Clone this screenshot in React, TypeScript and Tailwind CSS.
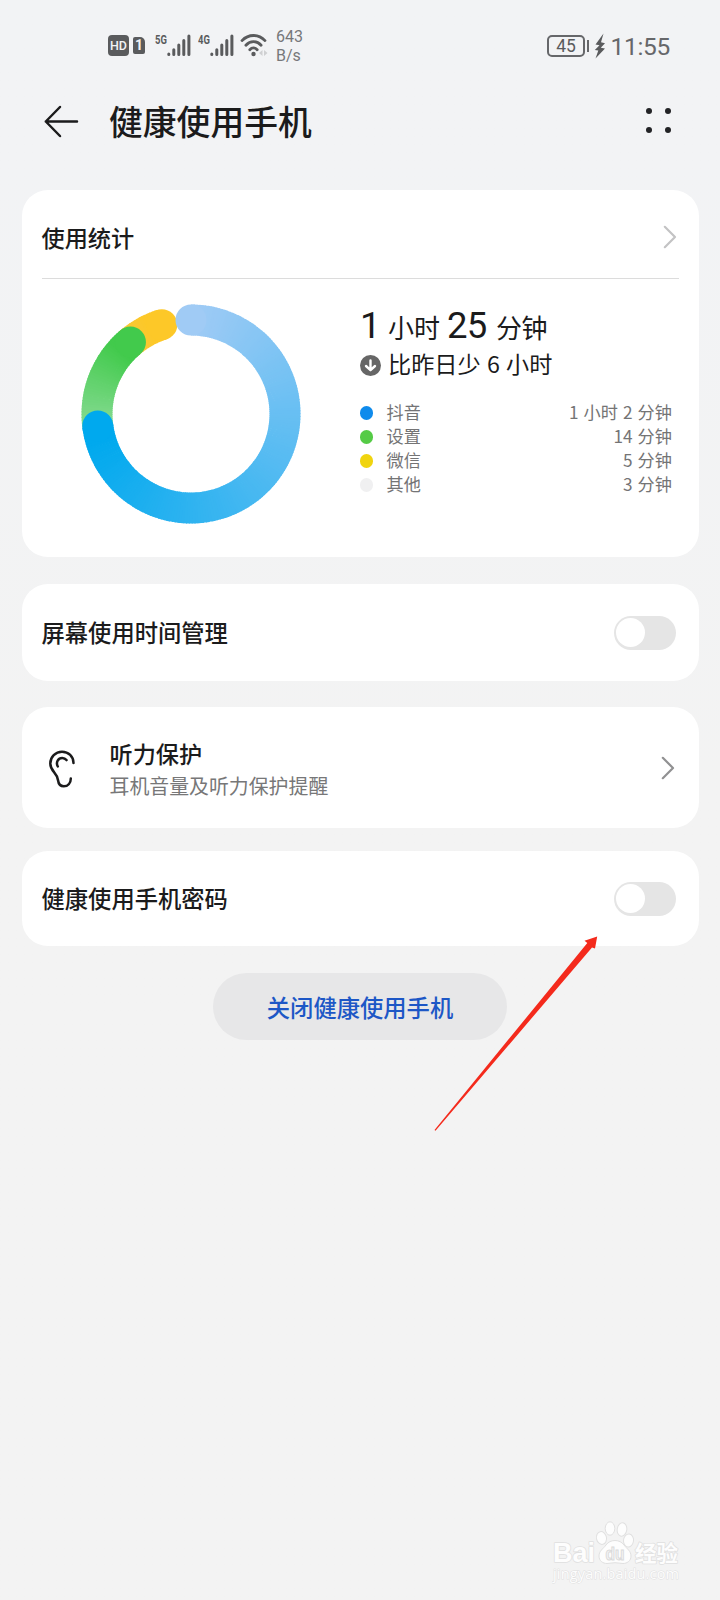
import { ReactNode } from "react";

type Usage = { name: string; time: string; dot: string };

const usages: Usage[] = [
  { name: "抖音", time: "1 小时 2 分钟", dot: "bg-[#0f8bec]" },
  { name: "设置", time: "14 分钟", dot: "bg-[#55cb46]" },
  { name: "微信", time: "5 分钟", dot: "bg-[#f0d40f]" },
  { name: "其他", time: "3 分钟", dot: "bg-[#f0f0f1]" },
];

// Angles are clockwise degrees from the top of the ring
const ring = [
  { from: 318, to: 341.9, start: [247, 200, 60], end: [253, 200, 40] },
  { from: 262, to: 319.9, start: [134, 219, 146], end: [66, 202, 76] },
  { from: 0, to: 262.7, start: [160, 203, 245], end: [0, 169, 238] },
];

const point = (deg: number) => {
  const rad = (deg * Math.PI) / 180;
  return [110 + 94 * Math.sin(rad), 110 - 94 * Math.cos(rad)];
};

const Donut = () => {
  const pieces: ReactNode[] = [];

  ring.forEach(({ from, to, start, end }, i) => {
    const steps = Math.ceil((to - from) / 1.5);
    const color = (t: number) => `rgb(${start.map((c, k) => Math.round(c + (end[k] - c) * Math.min(1, t))).join(",")})`;

    for (let s = 0; s < steps; s++) {
      const a = from + ((to - from) * s) / steps;
      const b = Math.min(to, from + ((to - from) * (s + 1)) / steps + 0.5);
      const [x1, y1] = point(a);
      const [x2, y2] = point(b);
      // The end colour is reached where the cap begins
      pieces.push(
        <path key={`${i}-${s}`} d={`M${x1} ${y1}A94 94 0 0 1 ${x2} ${y2}`} stroke={color((a - from) / (to - from - 9))} strokeWidth="31" fill="none" />
      );
    }

    // Round caps
    const [sx, sy] = point(from);
    const [ex, ey] = point(to);
    if (from === 0) pieces.push(<circle key="cap" cx={sx} cy={sy} r="15.5" fill={color(0)} />);
    pieces.push(<circle key={`${i}-end`} cx={ex} cy={ey} r="15.5" fill={color(1)} />);
  });

  return <svg className="w-[220px] h-[220px] shrink-0" viewBox="0 0 220 220">{pieces}</svg>;
};

const Card = ({ className, children }: { className: string; children: ReactNode }) => (
  <section className={`mx-[21.5px] bg-white rounded-[26px] ${className}`}>{children}</section>
);

const Chevron = ({ className }: { className: string }) => (
  <svg className={`w-[14px] h-[24px] ${className}`} viewBox="0 0 14 24" fill="none" stroke="currentColor" strokeWidth="2.2" strokeLinecap="round" strokeLinejoin="round">
    <path d="M1.8 1.8 12 12 1.8 22.2" />
  </svg>
);

const Toggle = () => (
  <button className="w-[62px] h-[34px] p-[2.5px] rounded-full bg-[#e5e5e5] flex items-center">
    <span className="w-[29px] h-[29px] rounded-full bg-white" />
  </button>
);

const Signal = ({ label }: { label: string }) => (
  <div className="flex items-start">
    <span className="w-[12px] h-[12px] text-[13.5px] leading-[11px] font-bold font-[Roboto] origin-left scale-x-70 whitespace-nowrap">{label}</span>
    <svg className="w-[24px] h-[23px]" viewBox="0 0 24 23" stroke="currentColor" strokeWidth="3" strokeLinecap="round">
      <path d="M1.8 20.6v-.6M6.8 20.6v-4.9M11.8 20.6V11M16.8 20.6V6.5M21.9 20.6V2" />
    </svg>
  </div>
);

const StatusBar = () => (
  <div className="h-[60px] pt-[27px] pl-[108px] pr-[50px] flex justify-between text-[#5a5b5d] font-[Roboto]">
    <div className="flex items-start">
      <span className="mt-[8px] w-[21px] h-[21px] rounded-[4px] bg-[#5a5b5d] text-[#f2f3f5] text-[12.5px] font-medium leading-[22px] text-center">HD</span>
      <span className="mt-[10px] ml-[4px] w-[12px] h-[17px] rounded-[2px] rounded-tr-[5px] bg-[#5a5b5d] text-[#f2f3f5] text-[14px] font-bold leading-[17px] text-center">1</span>
      <div className="mt-[7px] ml-[10px]"><Signal label="5G" /></div>
      <div className="mt-[7px] ml-[7px]"><Signal label="4G" /></div>
      <svg className="mt-[6px] ml-[6px] w-[28px] h-[25px]" viewBox="0 0 28 25" fill="none" stroke="currentColor" strokeWidth="2.8" strokeLinecap="round">
        <path d="M2 7.6C8.5.8 18.5.8 25 7.6M5.9 12.3c4.3-4.8 10.900-4.800 15.200 0M9.800 16.700c2.200-2.400 5.200-2.400 7.400 0" />
        <circle cx="13.5" cy="21" r="2.2" fill="currentColor" stroke="none" />
        <path d="M22.5 17 19 20l3.5 3zM24 17l3.500 3-3.500 3z" fill="#cfd0d2" stroke="none" />
      </svg>
      <div className="ml-[8px] flex flex-col text-[16px] leading-[19px] text-[#77787a]">
        <span>643</span>
        <span>B/s</span>
      </div>
    </div>

    <div className="flex items-start">
      <span className="mt-[8px] w-[38px] h-[22px] rounded-[5px] border-2 border-[#66676a] text-[17.5px] leading-[19px] text-center">45</span>
      <span className="mt-[13px] ml-[2px] w-[2.5px] h-[12px] bg-[#66676a]" />
      <svg className="mt-[6px] ml-[5px] w-[12px] h-[26px]" viewBox="0 0 12 26" fill="currentColor">
        <path d="M9.5 .5 1.5 11.5l4 .8L.8 17l3.500.6L1.500 25.500 11 15.500l-4.200-.8 4.200-4.500-4-.9z" />
      </svg>
      <span className="ml-[4px] mt-[5px] text-[24.5px] leading-[29px] text-[#66676a] tracking-[-0.3px]">11:55</span>
    </div>
  </div>
);

const Watermark = () => (
  <div className="absolute left-[552px] top-[1518px] w-[132px] h-[68px]">
    <svg className="w-full h-full" viewBox="0 0 132 68" fill="#fdfdfd" stroke="#e0e0e0" strokeWidth="1">
      <g strokeWidth="1.6" strokeLinejoin="round" className="[paint-order:stroke]">
        <text x="1" y="44" fontSize="28" fontWeight="700" fontFamily="Liberation Sans" textLength="42" lengthAdjust="spacingAndGlyphs">Bai</text>
        <text x="83" y="43" fontSize="21.5" fontWeight="700" fontFamily="Noto Sans CJK SC">经验</text>
        <text x="1" y="61" fontSize="14.5" fontFamily="Open Sans" strokeWidth="1" textLength="126">jingyan.baidu.com</text>
      </g>
      <ellipse cx="49.5" cy="20" rx="5" ry="6.5" transform="rotate(-12 49.5 20)" />
      <ellipse cx="58" cy="10.5" rx="4.8" ry="6.7" />
      <ellipse cx="70" cy="11.5" rx="4.8" ry="6.7" transform="rotate(8 70 11.5)" />
      <ellipse cx="76.5" cy="22.5" rx="5" ry="6.5" transform="rotate(8 76.5 22.5)" />
      <path d="M54 27c4-6 14-6 18 0 3 4 7 6 7 11 0 5-4 7.5-8 7.5-3 0-5-.8-8-.8s-5 .8-8 .8c-4 0-8-2.500-8-7.500 0-5 4-7 7-11z" />
      <text x="53.5" y="42" fontSize="18" fontWeight="700" fontFamily="Liberation Sans" fill="#f4f4f4" stroke="#dadada" textLength="19" lengthAdjust="spacingAndGlyphs">du</text>
    </svg>
  </div>
);

const App = () => {
  return (
    <main className="relative w-[720px] h-[1600px] overflow-hidden bg-linear-to-b from-[#f2f3f5] from-10% to-[#f3f3f3] to-50% font-['Noto_Sans_CJK_SC',sans-serif] text-[#1b1b1c]">
      <StatusBar />

      {/* Header */}
      <header className="h-[130px] pl-[44px] pr-[49px] flex items-start">
        <svg className="mt-[45px] w-[35px] h-[33px]" viewBox="0 0 35 33" fill="none" stroke="currentColor" strokeWidth="2.5" strokeLinecap="round" strokeLinejoin="round">
          <path d="M16 2 1.8 16.5 16 31M1.8 16.5H33" />
        </svg>
        <h1 className="mt-[37px] ml-[30px] text-[33.8px] leading-[48px] font-medium">健康使用手机</h1>
        <div className="mt-[48px] ml-auto grid grid-cols-2 gap-x-[13.5px] gap-y-[13px]">
          {[0, 1, 2, 3].map((i) => <span key={i} className="w-[6px] h-[6px] rounded-full bg-[#222326]" />)}
        </div>
      </header>

      {/* Usage statistics */}
      <Card className="h-[367px] pt-px">
        <div className="mx-[20px] h-[88px] pt-[5px] pr-[2px] flex items-center justify-between border-b border-[#dcdcdc]">
          <h2 className="text-[23.2px] font-medium">使用统计</h2>
          <Chevron className="text-[#c3c3c4]" />
        </div>

        <div className="pt-[25px] pl-[59.2px] pr-[26.5px] flex">
          <Donut />
          <div className="ml-[59.3px] flex-1">
            <p className="h-[46px] -mt-px flex items-baseline leading-[46px] whitespace-nowrap">
              <span className="w-[28px] text-[37px] font-[Roboto]">1</span>
              <span className="w-[59px] text-[26px]">小时</span>
              <span className="w-[49px] text-[36.5px] font-[Roboto] tracking-[-0.8px]">25</span>
              <span className="text-[26px] tracking-[-0.5px]">分钟</span>
            </p>
            <p className="mt-[-3px] h-[34px] flex items-center whitespace-nowrap">
              <svg className="mt-[5px] w-[21px] h-[21px]" viewBox="0 0 21 21" fill="none" stroke="#fff" strokeWidth="2.4" strokeLinecap="round" strokeLinejoin="round">
                <circle cx="10.5" cy="10.5" r="10.5" fill="#666" stroke="none" />
                <path d="M10.5 5.5v9.500M6 11l4.500 4.200L15 11" />
              </svg>
              <span className="ml-[7px] text-[23.2px] [word-spacing:1px]">比昨日少 6 小时</span>
            </p>
            <ul className="mt-[20px] text-[17.2px] leading-[24px] text-[#747475] [word-spacing:1.2px]">
              {usages.map((item) => (
                <li key={item.name} className="h-[24px] flex items-center">
                  <span className={`mt-[2px] w-[13.5px] h-[13.5px] rounded-full ${item.dot}`} />
                  <span className="ml-[13px]">{item.name}</span>
                  <span className="ml-auto">{item.time}</span>
                </li>
              ))}
            </ul>
          </div>
        </div>
      </Card>

      {/* Screen time */}
      <Card className="mt-[27px] h-[97px] pl-[20px] pr-[23px] flex items-center justify-between">
        <h2 className="text-[23.3px] font-medium">屏幕使用时间管理</h2>
        <Toggle />
      </Card>

      {/* Hearing */}
      <Card className="mt-[26px] h-[121px] pl-[27px] pr-[23.5px] flex items-center">
        <svg className="mt-[2px] w-[28px] h-[38px]" viewBox="0 0 28 38" fill="none" stroke="currentColor" strokeWidth="2.5" strokeLinecap="round">
          <path d="M24.5 13C24.5 6.5 19.5 1.8 13 1.8 6.5 1.8 1.3 7 1.3 13.5c0 3.500 1.200 5.800 3.900 8.800 2.300 2.600 3.500 4.700 3.900 8.200.4 3.400 2.500 5.700 5.700 5.700 4 0 7-3 7-7.800" />
          <path d="M8.8 16.5C6.5 12.3 9.3 8 13.2 8c1.700 0 3.200.7 4.300 2.100" />
        </svg>
        <div className="ml-[33px] mt-[1px]">
          <h2 className="text-[23.2px] leading-[34px] font-medium">听力保护</h2>
          <p className="text-[19.9px] leading-[31px] text-[#777778]">耳机音量及听力保护提醒</p>
        </div>
        <Chevron className="ml-auto mt-px text-[#919192]" />
      </Card>

      {/* Password */}
      <Card className="mt-[23px] h-[95px] pl-[20px] pr-[23px] flex items-center justify-between">
        <h2 className="text-[23.3px] font-medium">健康使用手机密码</h2>
        <Toggle />
      </Card>

      <button className="block mt-[27px] ml-[213px] w-[294px] h-[67px] pt-px rounded-full bg-[#e7e7e8] text-[23.3px] font-medium text-[#1d57c6]">
        关闭健康使用手机
      </button>

      {/* Pointer */}
      <svg className="absolute left-[430px] top-[930px] w-[175px] h-[205px]" viewBox="0 0 175 205" fill="#f42a1c">
        <path d="M4.5 200 157.3 13 154.5 10.8 167.2 6.5 165 18.5 162 17.5 5.5 200.8z" />
      </svg>

      <Watermark />
    </main>
  );
};

export default App;
